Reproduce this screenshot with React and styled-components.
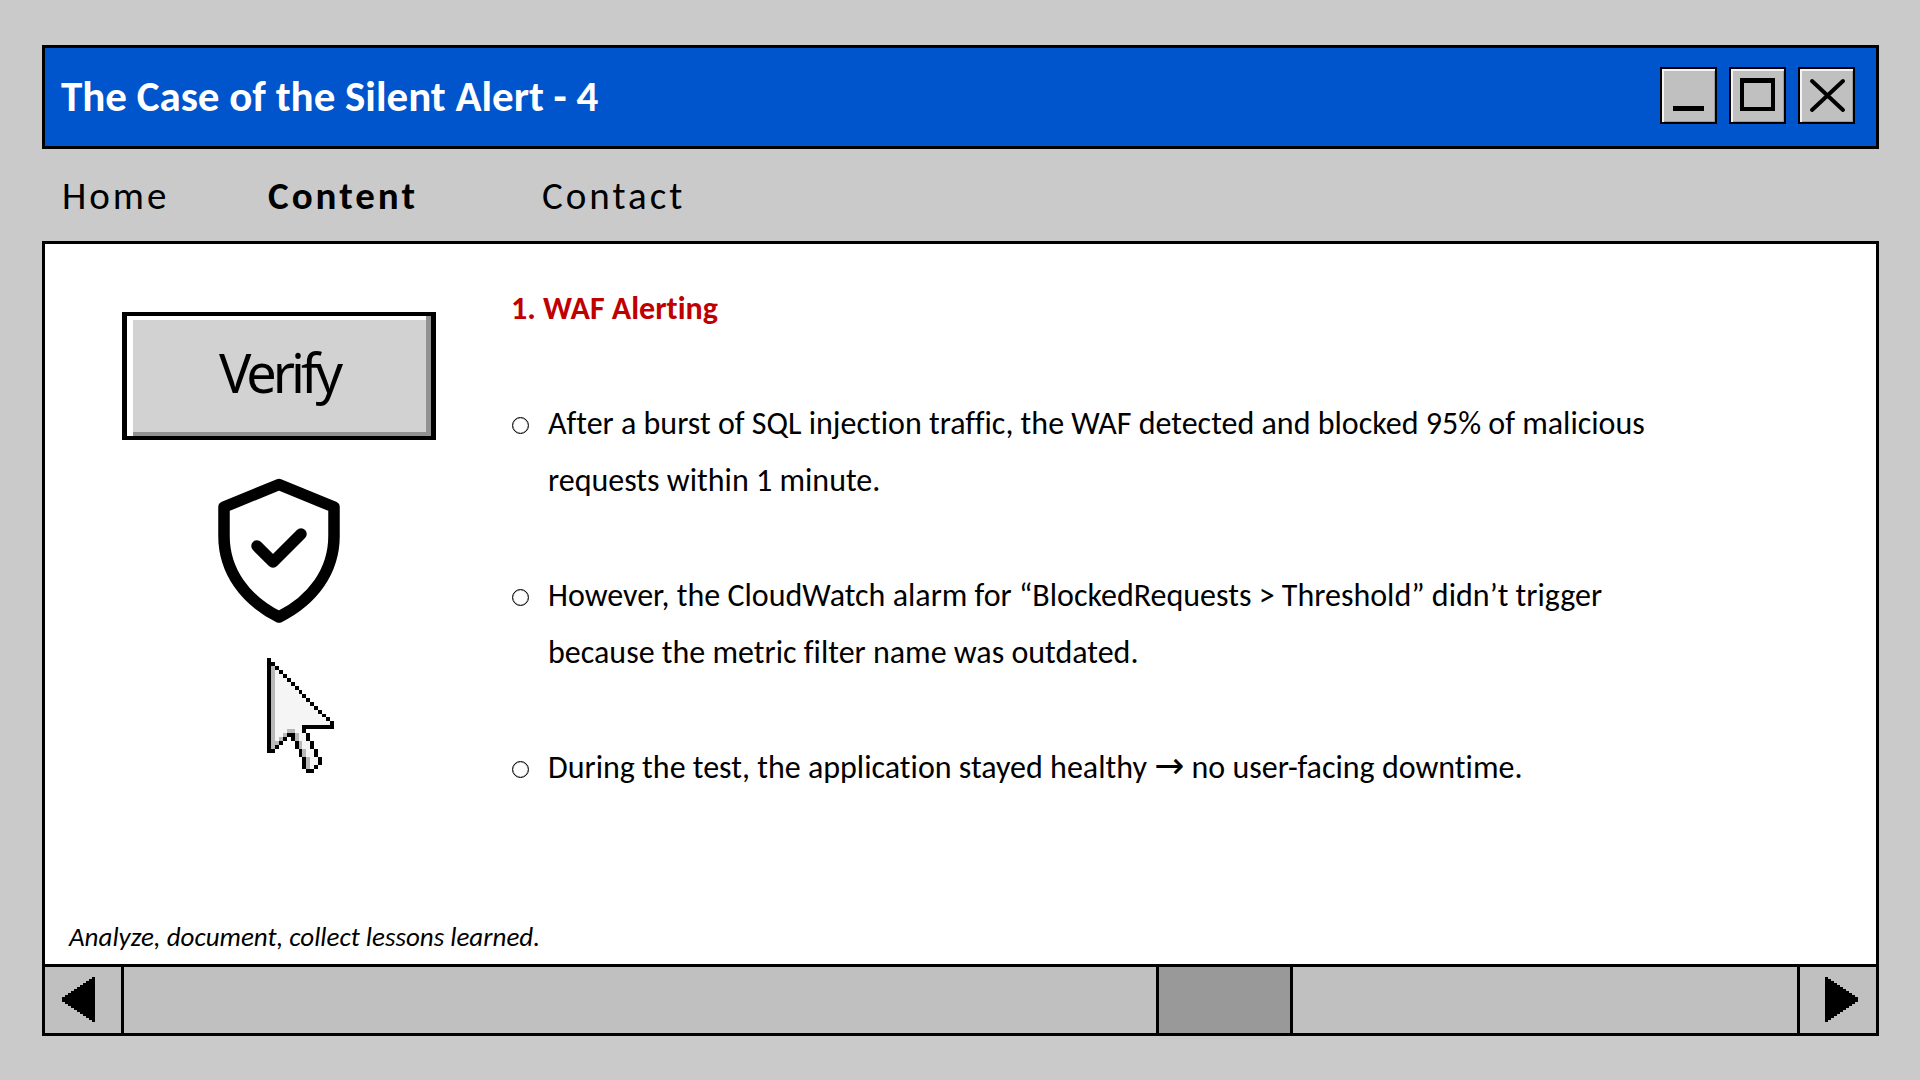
import React, { useState } from "react";
import styled, { createGlobalStyle } from "styled-components";

const GlobalStyle = createGlobalStyle`
  * {
    box-sizing: border-box;
  }

  body {
    margin: 0;
    background: #cacaca;
    color: #000;
    font-family: Calibri, Carlito, Lato, sans-serif;
    font-variant-ligatures: none;
  }
`;

const Desktop = styled.div`
  display: flex;
  flex-direction: column;
  min-height: 100vh;
  padding: 45px 41px 44px 42px;
`;

const TitleBar = styled.header`
  display: flex;
  align-items: center;
  justify-content: space-between;
  height: 104px;
  padding: 0 21px 0 16px;
  border: 3px solid #000;
  background: #0055cc;
`;

const Title = styled.h1`
  margin: 0;
  color: #fff;
  font-size: 43px;
  line-height: 52px;
`;

const WindowButtons = styled.div`
  display: flex;
  gap: 12px;
  padding-bottom: 3px;
`;

const WindowButton = styled.button`
  width: 57px;
  height: 57px;
  padding: 0;
  border: 2px solid #000;
  background: #c0c0c0;
  box-shadow: inset 2px 2px 0 #f4f4f4, inset -1px -1px 0 #9a9a9a;

  svg {
    display: block;
  }
`;

const Nav = styled.nav`
  display: grid;
  grid-template-columns: 206px 274px auto;
  align-items: center;
  height: 92px;
  padding: 2px 20px 0;
`;

const NavLink = styled.a`
  color: #000;
  font-size: 39px;
  font-weight: ${props => (props.$active ? "bold" : "normal")};
  line-height: 48px;
  letter-spacing: 3px;
  text-decoration: none;
`;

const Panel = styled.main`
  display: flex;
  flex: 1;
  flex-direction: column;
  border: 3px solid #000;
  background: #fff;
`;

const PanelBody = styled.div`
  display: flex;
  flex: 1;
  gap: 75px;
  padding: 36px 77px 0;
`;

const Sidebar = styled.aside`
  display: flex;
  flex-direction: column;
  flex-shrink: 0;
  align-items: center;
  width: 314px;
  padding-top: 32px;
`;

const VerifyButton = styled.button`
  width: 100%;
  height: 128px;
  margin-bottom: 38px;
  padding: 0 0 8px;
  border: solid #000;
  border-width: 4px 5px;
  background: #d2d2d2;
  box-shadow: inset 6px 0 0 #fff, inset -5px 0 0 #929292,
    inset 0 4px 0 #fff, inset 0 -4px 0 #929292;
  color: #000;
  font-family: "Noto Sans", "Open Sans", sans-serif;
  font-size: 54px;
  letter-spacing: -4px;
`;

const CursorHolder = styled.div`
  margin-top: 35px;
  padding-left: 43px;

  svg {
    display: block;
  }
`;

const Article = styled.article`
  max-width: 1150px;
  font-size: 32px;
  line-height: 57px;
`;

const Heading = styled.h2`
  margin: 0 0 58px;
  color: #c00000;
  font-size: 32px;
  line-height: 57px;
`;

const List = styled.ul`
  display: flex;
  flex-direction: column;
  gap: 58px;
  margin: 0;
  padding: 0;
  list-style: none;
`;

const Item = styled.li`
  display: flex;
  gap: 19px;

  &::before {
    content: "";
    flex-shrink: 0;
    width: 15px;
    height: 15px;
    margin: 22px 0 0 1px;
    border: 1px solid #000;
    border-radius: 50%;
    box-shadow: inset 0 0 1px #000;
  }
`;

const Arrow = styled.span`
  font-family: "DejaVu Sans", sans-serif;
  font-size: 36px;
  line-height: 1;
`;

const Note = styled.p`
  margin: 0;
  padding: 0 24px 9px;
  font-size: 27px;
  font-style: italic;
  line-height: 36px;
`;

const ScrollBar = styled.div`
  display: flex;
  height: 69px;
  border-top: 3px solid #000;
  background: #c0c0c0;
`;

const ScrollButton = styled.button`
  display: flex;
  align-items: center;
  flex-shrink: 0;
  width: 79px;
  padding: ${props => (props.$next ? "0 0 2px 25px" : "0 0 2px 17px")};
  border: 0 solid #000;
  border-width: ${props => (props.$next ? "0 0 0 3px" : "0 3px 0 0")};
  background: #c0c0c0;
`;

const ScrollRange = styled.input`
  flex: 1;
  min-width: 0;
  height: 66px;
  margin: 0;
  appearance: none;
  background: #c0c0c0;

  &::-webkit-slider-thumb {
    width: 137px;
    height: 66px;
    appearance: none;
    border: solid #000;
    border-width: 0 3px;
    border-radius: 0;
    background: #999;
  }
`;

const bullets = [
  "After a burst of SQL injection traffic, the WAF detected and blocked 95% of malicious requests within 1 minute.",
  "However, the CloudWatch alarm for “BlockedRequests > Threshold” didn’t trigger because the metric filter name was outdated.",
  <>
    During the test, the application stayed healthy <Arrow>→</Arrow> no
    user-facing downtime.
  </>
];

// # outline, g shade, . body
const cursorRows = [
  "#",
  "##",
  "#g#",
  "#g.#",
  "#g..#",
  "#g...#",
  "#g....#",
  "#g.....#",
  "#g......#",
  "#g.......#",
  "#g........#",
  "#g.........#",
  "#g..........#",
  "#g...........#",
  "#g............#",
  "#g.............#",
  "#g..............#",
  "#g.......########",
  "#g...gg..#",
  "#g..g##g..#",
  "#g.g# #g..#",
  "#gg#   #g..#",
  "#g#    #g..#",
  "##      #g..#",
  "        #g..#",
  "         #g..#",
  "         #g..#",
  "         #g.#",
  "          ##"
];

const cursorColors = { "#": "#000", g: "#b8b8b8", ".": "#f5f5f5" };

const Cursor = () => (
  <svg
    width="67"
    height="115"
    viewBox="0 0 17 29"
    preserveAspectRatio="none"
    shapeRendering="crispEdges"
    aria-hidden="true"
  >
    {cursorRows.map((row, y) =>
      row
        .split("")
        .map(
          (cell, x) =>
            cell !== " " && (
              <rect
                key={`${x}-${y}`}
                x={x}
                y={y}
                width="1"
                height="1"
                fill={cursorColors[cell]}
              />
            )
        )
    )}
  </svg>
);

const Shield = () => (
  <svg
    width="122"
    height="145"
    viewBox="0 0 122 145"
    fill="none"
    stroke="#000"
    strokeWidth="11.5"
    strokeLinejoin="round"
    strokeLinecap="round"
    aria-hidden="true"
  >
    <path d="M61 6.5 L116 29 V58 C116 93 95 122 61 139 C27 122 6 93 6 58 V29 Z" />
    <path d="M39 68 L55 84 L83 56" />
  </svg>
);

const steps = [0, 1, 2, 3, 4, 5, 6, 7, 8, 9, 10];

const Triangle = ({ flip }) => (
  <svg
    width="33"
    height="45"
    viewBox="0 0 33 45"
    shapeRendering="crispEdges"
    aria-hidden="true"
  >
    {steps.map(i => (
      <rect
        key={i}
        x={flip ? 30 - i * 3 : i * 3}
        y={20 - i * 2}
        width="3"
        height={5 + i * 4}
      />
    ))}
  </svg>
);

const App = () => {
  const [position, setPosition] = useState(86);

  return (
    <>
      <GlobalStyle />
      <Desktop>
        <TitleBar>
          <Title>The Case of the Silent Alert - 4</Title>
          <WindowButtons>
            <WindowButton aria-label="Minimize">
              <svg width="53" height="53">
                <rect x="11" y="37" width="31" height="5" />
              </svg>
            </WindowButton>
            <WindowButton aria-label="Maximize">
              <svg width="53" height="53">
                <path d="M9 9h35v33H9zM13 14v24h27V14z" fillRule="evenodd" />
              </svg>
            </WindowButton>
            <WindowButton aria-label="Close">
              <svg width="53" height="53" stroke="#000" strokeWidth="4">
                <path d="M12 12 L43 41 M43 12 L12 41" strokeLinecap="round" />
              </svg>
            </WindowButton>
          </WindowButtons>
        </TitleBar>
        <Nav>
          <NavLink href="#home">Home</NavLink>
          <NavLink href="#content" $active>
            Content
          </NavLink>
          <NavLink href="#contact">Contact</NavLink>
        </Nav>
        <Panel>
          <PanelBody>
            <Sidebar>
              <VerifyButton>Verify</VerifyButton>
              <Shield />
              <CursorHolder>
                <Cursor />
              </CursorHolder>
            </Sidebar>
            <Article>
              <Heading>1. WAF Alerting</Heading>
              <List>
                {bullets.map((bullet, i) => (
                  <Item key={i}>
                    <div>{bullet}</div>
                  </Item>
                ))}
              </List>
            </Article>
          </PanelBody>
          <Note>Analyze, document, collect lessons learned.</Note>
          <ScrollBar>
            <ScrollButton aria-label="Scroll left">
              <Triangle />
            </ScrollButton>
            <ScrollRange
              type="range"
              min="0"
              max="128"
              value={position}
              onChange={e => setPosition(Number(e.target.value))}
              aria-label="Scroll position"
            />
            <ScrollButton $next aria-label="Scroll right">
              <Triangle flip />
            </ScrollButton>
          </ScrollBar>
        </Panel>
      </Desktop>
    </>
  );
};

export default App;
